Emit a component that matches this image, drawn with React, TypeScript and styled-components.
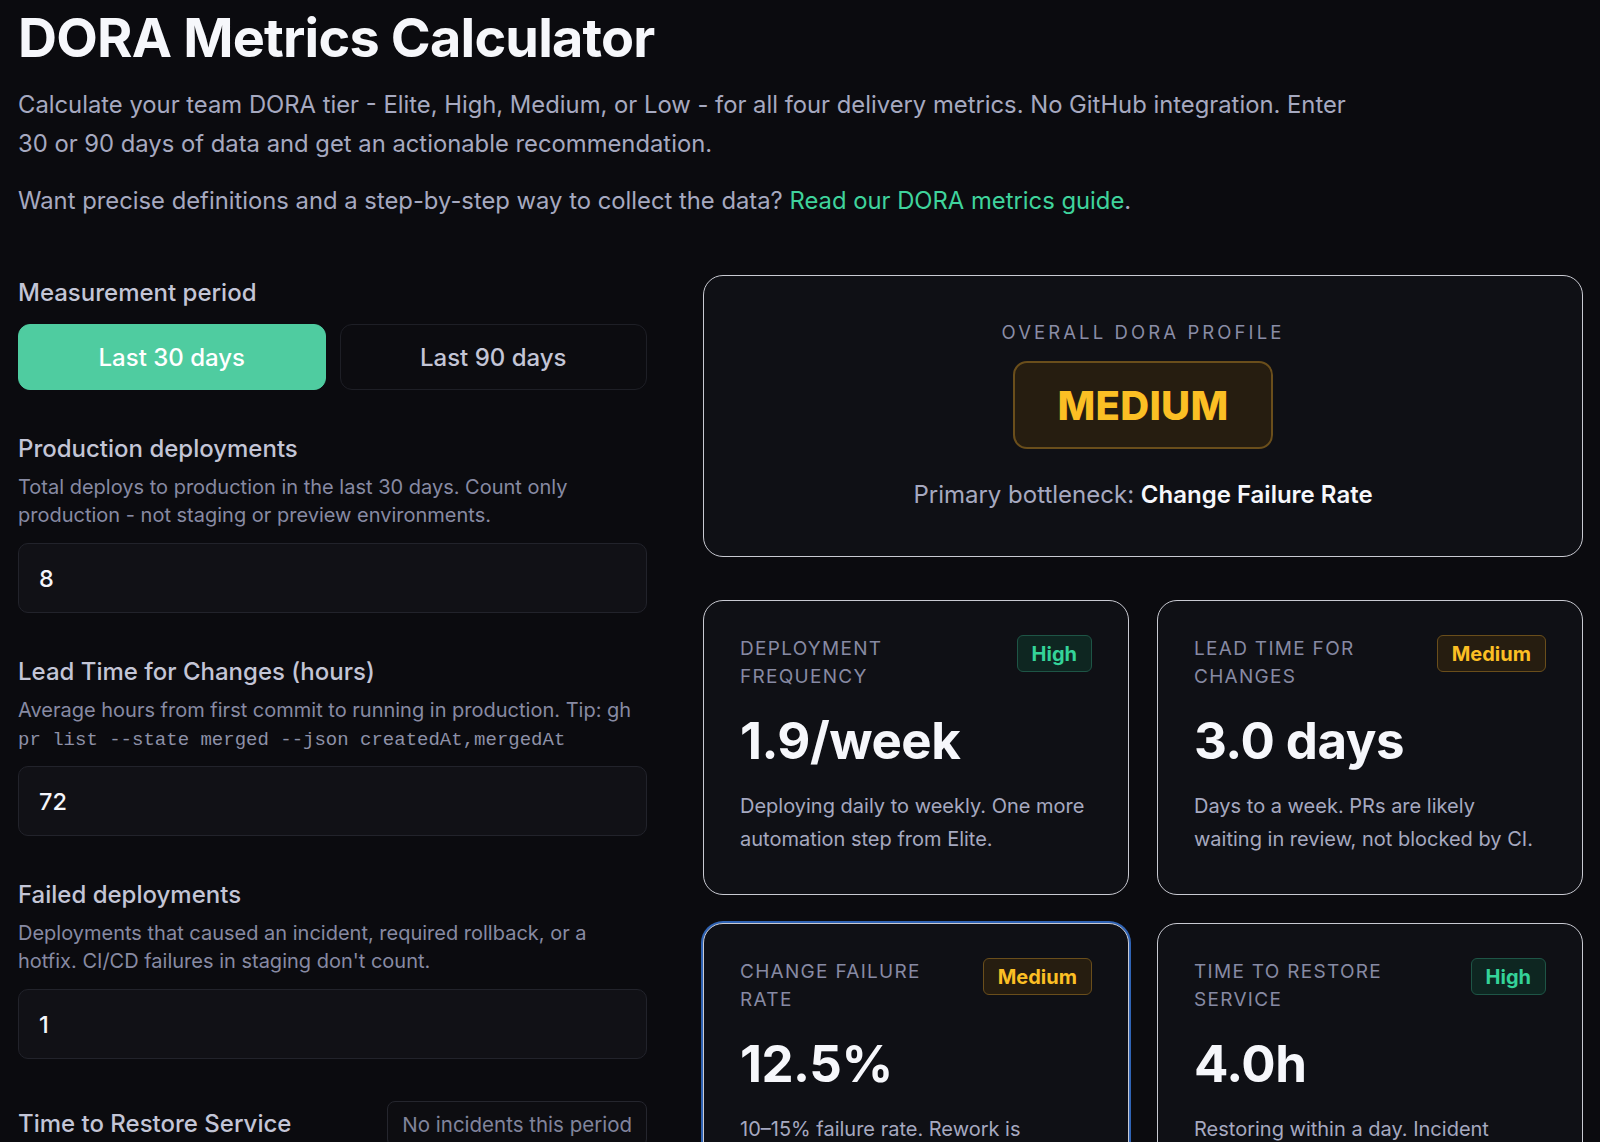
import * as React from "react";
import styled, { createGlobalStyle } from "styled-components";

type Tier = "Elite" | "High" | "Medium" | "Low";

const tierColors: Record<Tier, { fg: string; bg: string; border: string }> = {
	Elite: { fg: "#a78bfa", bg: "#1d1730", border: "#4c3d80" },
	High: { fg: "#34d399", bg: "#0e2621", border: "#1e5546" },
	Medium: { fg: "#fbbf24", bg: "#261d10", border: "#6a4e1b" },
	Low: { fg: "#f87171", bg: "#2a1414", border: "#6e2a2a" },
};

const metrics: {
	label: string;
	tier: Tier;
	value: string;
	note: string;
	focused?: boolean;
}[] = [
	{
		label: "Deployment Frequency",
		tier: "High",
		value: "1.9/week",
		note: "Deploying daily to weekly. One more automation step from Elite.",
	},
	{
		label: "Lead Time for Changes",
		tier: "Medium",
		value: "3.0 days",
		note: "Days to a week. PRs are likely waiting in review, not blocked by CI.",
	},
	{
		label: "Change Failure Rate",
		tier: "Medium",
		value: "12.5%",
		note: "10–15% failure rate. Rework is consuming delivery capacity each sprint.",
		focused: true,
	},
	{
		label: "Time to Restore Service",
		tier: "High",
		value: "4.0h",
		note: "Restoring within a day. Incident response works, but runbooks would speed it up.",
	},
];

export default function App() {
	const [period, setPeriod] = React.useState<30 | 90>(30);
	const [deploys, setDeploys] = React.useState("8");
	const [leadTime, setLeadTime] = React.useState("72");
	const [failed, setFailed] = React.useState("1");

	return (
		<>
			<GlobalStyle />
			<Page>
				<Title>DORA Metrics Calculator</Title>
				<Lead>
					Calculate your team DORA tier - Elite, High, Medium, or Low - for all four delivery
					metrics. No GitHub integration. Enter 30 or 90 days of data and get an actionable
					recommendation.
				</Lead>
				<Lead>
					Want precise definitions and a step-by-step way to collect the data?{" "}
					<GuideLink href="#guide">Read our DORA metrics guide</GuideLink>.
				</Lead>

				<Layout>
					<Inputs>
						<Field>
							<FieldLabel>Measurement period</FieldLabel>
							<PeriodToggle>
								<PeriodButton $active={period === 30} onClick={() => setPeriod(30)}>
									Last 30 days
								</PeriodButton>
								<PeriodButton $active={period === 90} onClick={() => setPeriod(90)}>
									Last 90 days
								</PeriodButton>
							</PeriodToggle>
						</Field>

						<Field>
							<FieldLabel htmlFor="deploys">Production deployments</FieldLabel>
							<Help>
								{`Total deploys to production in the last ${period} days. Count only production - not staging or preview environments.`}
							</Help>
							<NumberInput
								id="deploys"
								type="number"
								value={deploys}
								onChange={e => setDeploys(e.currentTarget.value)}
							/>
						</Field>

						<Field>
							<FieldLabel htmlFor="lead">Lead Time for Changes (hours)</FieldLabel>
							<Help>
								Average hours from first commit to running in production. Tip: gh{" "}
								<Code>pr list --state merged --json createdAt,mergedAt</Code>
							</Help>
							<NumberInput
								id="lead"
								type="number"
								value={leadTime}
								onChange={e => setLeadTime(e.currentTarget.value)}
							/>
						</Field>

						<Field>
							<FieldLabel htmlFor="failed">Failed deployments</FieldLabel>
							<Help>
								Deployments that caused an incident, required rollback, or a hotfix. CI/CD
								failures in staging don't count.
							</Help>
							<NumberInput
								id="failed"
								type="number"
								value={failed}
								onChange={e => setFailed(e.currentTarget.value)}
							/>
						</Field>

						<InlineField>
							<FieldLabel>Time to Restore Service</FieldLabel>
							<Chip>No incidents this period</Chip>
						</InlineField>
					</Inputs>

					<Results>
						<ProfileCard>
							<Eyebrow>Overall DORA profile</Eyebrow>
							<ProfileBadge $tier="Medium">MEDIUM</ProfileBadge>
							<Bottleneck>
								Primary bottleneck: <strong>Change Failure Rate</strong>
							</Bottleneck>
						</ProfileCard>

						<MetricGrid>
							{metrics.map(m => (
								<MetricCard key={m.label} $focused={m.focused}>
									<MetricHead>
										<MetricLabel>{m.label}</MetricLabel>
										<TierBadge $tier={m.tier}>{m.tier}</TierBadge>
									</MetricHead>
									<MetricValue>{m.value}</MetricValue>
									<MetricNote>{m.note}</MetricNote>
								</MetricCard>
							))}
						</MetricGrid>
					</Results>
				</Layout>
			</Page>
		</>
	);
}

const GlobalStyle = createGlobalStyle`
	* {
		box-sizing: border-box;
	}
	body {
		margin: 0;
		background: #0b0b0f;
		color: #f4f5fa;
		font-family: Inter, "Noto Sans", sans-serif;
		overflow: hidden;
	}
`;

const Page = styled.div`
	padding: 0 17px 40px 18px;
`;

const Title = styled.h1`
	margin: 0;
	padding-top: 7px;
	font-size: 54px;
	line-height: 62px;
	font-weight: 700;
	letter-spacing: -0.8px;
	color: #f6f7fb;
`;

const Lead = styled.p`
	margin: 16px 0 0;
	max-width: 1345px;
	font-size: 23.8px;
	line-height: 39px;
	color: #a6a9c0;

	& + & {
		margin-top: 18px;
	}
`;

const GuideLink = styled.a`
	color: #3fd39c;
	text-decoration: none;
`;

const Layout = styled.div`
	display: grid;
	grid-template-columns: 629px 880px;
	column-gap: 56px;
	align-items: start;
	margin-top: 55px;
`;

const Inputs = styled.div`
	display: flex;
	flex-direction: column;
	gap: 44px;
	padding-top: 3px;
`;

const Field = styled.div`
	display: flex;
	flex-direction: column;
`;

const InlineField = styled.div`
	display: flex;
	align-items: center;
	justify-content: space-between;
	margin-top: -2px;
`;

const FieldLabel = styled.label`
	font-size: 24px;
	line-height: 30px;
	font-weight: 500;
	color: #c3c5d6;
`;

const PeriodToggle = styled.div`
	display: grid;
	grid-template-columns: 1fr 1fr;
	gap: 14px;
	margin-top: 16px;
`;

const PeriodButton = styled.button<{ $active: boolean }>`
	height: 66px;
	border-radius: 12px;
	border: 1px solid ${({ $active }) => ($active ? "#4fcca0" : "#1e1f26")};
	background: ${({ $active }) => ($active ? "#4fcca0" : "#0c0c10")};
	color: ${({ $active }) => ($active ? "#ffffff" : "#c3c5d6")};
	font-family: inherit;
	font-size: 24px;
	font-weight: 500;
	cursor: pointer;
`;

const Help = styled.p`
	margin: 9px 0 0;
	font-size: 20px;
	line-height: 28px;
	color: #878aa3;
`;

const Code = styled.code`
	font-family: "Liberation Mono", "DejaVu Sans Mono", monospace;
	font-size: 19px;
	line-height: 1;
	color: #8e91a8;
`;

const NumberInput = styled.input`
	margin-top: 14px;
	height: 70px;
	padding: 0 20px;
	border-radius: 10px;
	border: 1px solid #22232b;
	background: #111116;
	color: #f4f5fa;
	font-family: inherit;
	font-size: 23.5px;
	font-weight: 500;
	outline: none;
	-moz-appearance: textfield;

	&::-webkit-outer-spin-button,
	&::-webkit-inner-spin-button {
		-webkit-appearance: none;
		margin: 0;
	}
`;

const Chip = styled.button`
	height: 46px;
	padding: 0 14px;
	border-radius: 8px;
	border: 1px solid #25262e;
	background: #0d0d11;
	color: #80849c;
	font-family: inherit;
	font-size: 20.5px;
	cursor: pointer;
`;

const Results = styled.div`
	display: flex;
	flex-direction: column;
	gap: 43px;
`;

const ProfileCard = styled.section`
	display: flex;
	flex-direction: column;
	align-items: center;
	padding: 44px 24px 46px;
	border-radius: 20px;
	border: 1.5px solid #c9cad2;
	background: #0f1015;
`;

const Eyebrow = styled.div`
	font-size: 18.5px;
	line-height: 24px;
	letter-spacing: 3.1px;
	text-transform: uppercase;
	color: #8a8da6;
`;

const ProfileBadge = styled.div<{ $tier: Tier }>`
	display: flex;
	align-items: center;
	justify-content: center;
	width: 260px;
	height: 88px;
	margin-top: 17px;
	border-radius: 14px;
	border: 2px solid ${({ $tier }) => tierColors[$tier].border};
	background: ${({ $tier }) => tierColors[$tier].bg};
	color: ${({ $tier }) => tierColors[$tier].fg};
	font-size: 40px;
	font-weight: 800;
	letter-spacing: 0.3px;
`;

const Bottleneck = styled.p`
	margin: 31px 0 0;
	font-size: 24px;
	line-height: 30px;
	color: #a6a9c0;

	strong {
		color: #f6f7fb;
		font-weight: 600;
	}
`;

const MetricGrid = styled.div`
	display: grid;
	grid-template-columns: 1fr 1fr;
	column-gap: 28px;
	row-gap: 28px;
`;

const MetricCard = styled.article<{ $focused?: boolean }>`
	min-height: 291px;
	padding: 34px 36px 38px;
	border-radius: 20px;
	border: 1.5px solid #c9cad2;
	box-shadow: ${({ $focused }) => ($focused ? "0 0 0 2px #2f63b4" : "none")};
	background: #0f1015;
`;

const MetricHead = styled.div`
	display: flex;
	align-items: flex-start;
	justify-content: space-between;
	gap: 20px;
`;

const MetricLabel = styled.div`
	font-size: 19px;
	line-height: 28px;
	letter-spacing: 1.3px;
	text-transform: uppercase;
	color: #878aa3;
	max-width: 230px;
`;

const TierBadge = styled.span<{ $tier: Tier }>`
	flex-shrink: 0;
	height: 37px;
	padding: 0 14px;
	display: inline-flex;
	align-items: center;
	border-radius: 6px;
	border: 1px solid ${({ $tier }) => tierColors[$tier].border};
	background: ${({ $tier }) => tierColors[$tier].bg};
	color: ${({ $tier }) => tierColors[$tier].fg};
	font-size: 20px;
	font-weight: 700;
`;

const MetricValue = styled.div`
	margin-top: 22px;
	font-size: 51px;
	line-height: 56px;
	font-weight: 700;
	letter-spacing: -0.5px;
	color: #f6f7fb;
`;

const MetricNote = styled.p`
	margin: 21px 0 0;
	max-width: 349px;
	font-size: 20px;
	line-height: 33px;
	color: #a6a9c0;
`;
